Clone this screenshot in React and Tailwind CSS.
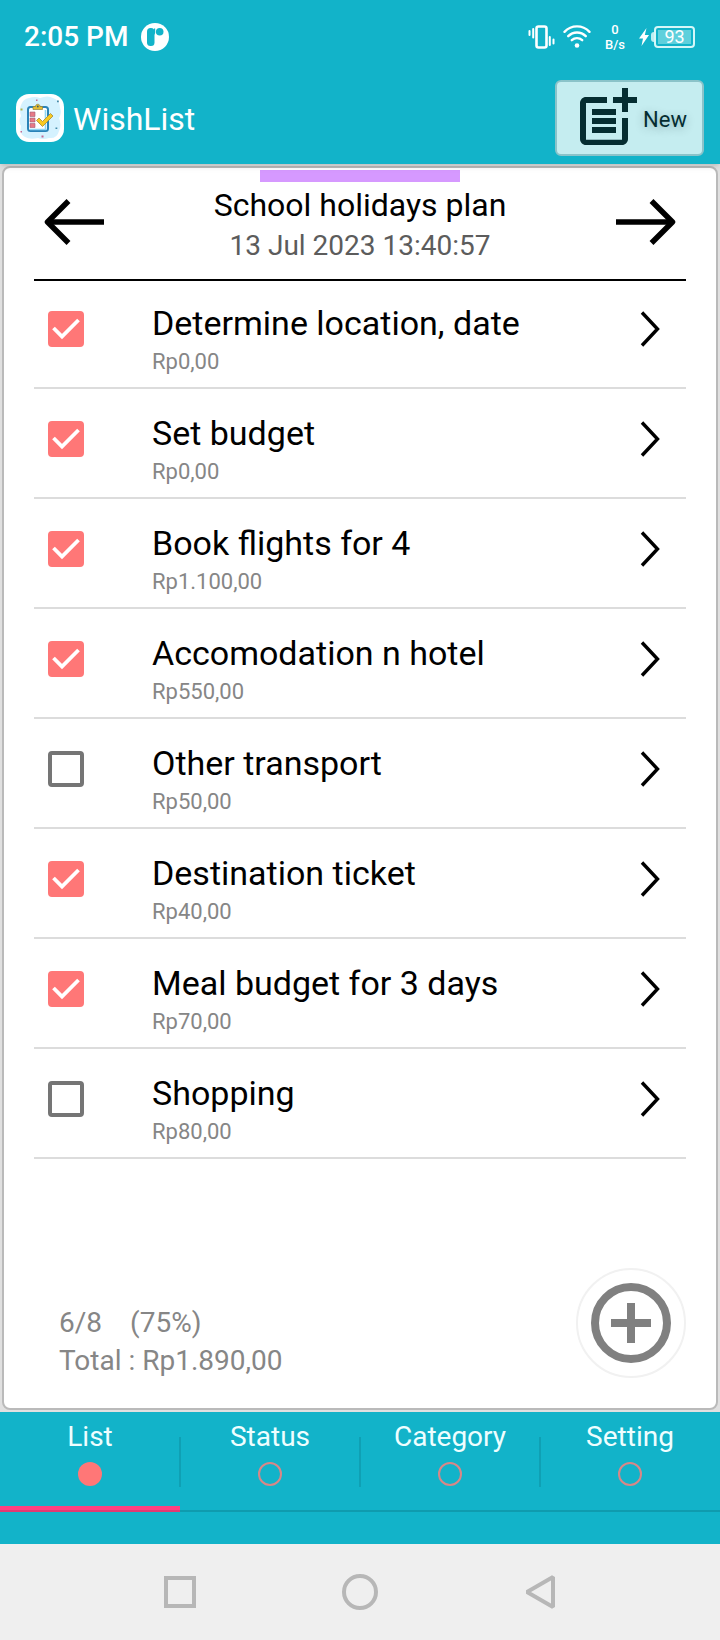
import { useState } from 'react';
import { MdPostAdd } from 'react-icons/md';

const initialItems = [
    { id: 1, name: 'Determine location, date', price: 0, done: true },
    { id: 2, name: 'Set budget', price: 0, done: true },
    { id: 3, name: 'Book flights for 4', price: 1100, done: true },
    { id: 4, name: 'Accomodation n hotel', price: 550, done: true },
    { id: 5, name: 'Other transport', price: 50, done: false },
    { id: 6, name: 'Destination ticket', price: 40, done: true },
    { id: 7, name: 'Meal budget for 3 days', price: 70, done: true },
    { id: 8, name: 'Shopping', price: 80, done: false },
];

const tabs = ['List', 'Status', 'Category', 'Setting'];

const formatPrice = (value) => `Rp${String(value).replace(/\B(?=(\d{3})+$)/g, '.')},00`;

function StatusBar() {
    return (
        <div className="h-[72px] pt-0.5 pl-6 pr-[25px] flex items-center justify-between">
            <div className="flex items-center gap-[13px]">
                <span className="text-[28px] leading-8 font-medium">2:05 PM</span>
                <svg viewBox="0 0 28 28" className="w-7 h-7">
                    <circle cx="14" cy="14" r="14" fill="#fff" />
                    <rect x="6" y="5" width="7.5" height="18" rx="3.5" fill="#12b3c9" />
                    <circle cx="18.7" cy="8.8" r="3.8" fill="#12b3c9" />
                    <path d="M13 5.5 H14.2 V10 L13 12Z" fill="#12b3c9" />
                </svg>
            </div>

            <div className="flex items-center">
                {/* Vibrate */}
                <svg viewBox="0 0 28 24" className="w-7 h-6 mr-[7px]" fill="none" stroke="#fff" strokeLinecap="round">
                    <rect x="8.5" y="1.5" width="10" height="21" rx="2" strokeWidth="2.6" />
                    <path d="M1.5 6 V10 M5.2 4 V12.5 M21.8 12 V20 M25.5 14.5 V18.5" strokeWidth="2" />
                </svg>

                {/* Wifi */}
                <svg viewBox="0 0 28 24" className="w-7 h-6 mr-[14px]" fill="none" stroke="#fff" strokeWidth="2.4" strokeLinecap="round">
                    <path d="M1.5 6.8 C8.5 -0.4 19.5 -0.4 26.5 6.8" />
                    <path d="M5.2 11.2 C10.2 6.2 17.8 6.2 22.8 11.2" />
                    <path d="M8.8 15.2 C11.8 12.4 16.2 12.4 19.2 15.2" />
                    <circle cx="14" cy="20.5" r="2.3" fill="#fff" stroke="none" />
                </svg>

                <div className="w-5 mr-[14px] text-center text-[13px] leading-[15px] font-medium">
                    <div>0</div>
                    <div>B/s</div>
                </div>

                {/* Battery */}
                <svg viewBox="0 0 10 18" className="w-[10px] h-[18px] mr-0.5">
                    <path d="M7.5 0 L0 10.5 H4 L2.5 18 L10 7 H5.8Z" fill="#fff" />
                </svg>
                <span className="w-[3px] h-[10px] rounded-l-sm bg-[#bdeef2]" />
                <div className="w-[41px] h-[22px] p-0.5 border-2 border-[#d5f7f8] rounded-[4px] flex">
                    <div className="w-full bg-[#5fd0dc] flex items-center justify-center text-[18px] leading-4">93</div>
                </div>
            </div>
        </div>
    );
}

function Logo() {
    return (
        <svg viewBox="0 0 48 48" className="w-12 h-12">
            <rect width="48" height="48" rx="13" fill="#fff" />
            <path d="M13 4 Q19 2 24 4 Q32 1 37 4 Q44 6 44 14 Q46 19 43 24 Q46 31 43 37 Q41 45 33 44 Q27 46 22 44 Q14 46 9 43 Q3 40 5 32 Q2 27 5 22 Q3 16 5 11 Q7 5 13 4Z" fill="#d5f2ff" />
            <rect x="12" y="13" width="20" height="24" rx="2.5" fill="#fff" stroke="#2a83b8" strokeWidth="2" />
            <path d="M14 35.5 H29.5 V16" fill="none" stroke="#8fd6f5" strokeWidth="1.6" />
            <path d="M17 15.5 V12.5 H19.5 C19.5 9.5 24 9.5 24 12.5 H26.5 V15.5Z" fill="#e5bd32" stroke="#94833c" strokeWidth="0.7" />
            <circle cx="21.8" cy="12.5" r="0.9" fill="#3d5a64" />
            <path d="M14 18 H19 V22.5 H14Z M14 24 H19 V28 H14Z M14 29.5 H19 V33.5 H14Z" fill="#e77886" stroke="#9d6079" strokeWidth="0.6" />
            <path d="M20.5 26.5 L23 24 L26.5 27.5 L34.5 19.5 L37 22 L26.5 32.5Z" fill="#f8c922" stroke="#a58a35" strokeWidth="0.8" />
            <path d="M20 5.5 H21.5 V7 H20Z M4.5 37 H6 V38.5 H4.5Z M25.5 41.5 H27.5 V43.5 H25.5Z" fill="#c46a93" />
            <path d="M41 6.5 H42.8 V8.3 H41Z M39.5 33.5 H41.3 V35 H39.5Z" fill="#4389a8" />
            <path d="M4.5 14.5 H6.5 V16.5 H4.5Z" fill="#aeb44c" />
        </svg>
    );
}

function Arrow({ label, flip }) {
    return (
        <button type="button" aria-label={label} className="h-20 w-[60px] flex items-center justify-center">
            <svg viewBox="0 0 60 48" className={flip ? 'w-[60px] h-12 rotate-180' : 'w-[60px] h-12'} fill="none" stroke="#000">
                <path d="M3 24 H60" strokeWidth="5.5" />
                <path d="M24.5 3 L3.5 24 L24.5 45" strokeWidth="5.5" strokeLinejoin="round" />
            </svg>
        </button>
    );
}

function Item({ item, onToggle }) {
    return (
        <li className="flex items-start pt-6 first:pt-[22px] pb-1.5 border-b-2 border-[#dcdcdc]">
            <div className="w-[118px] h-[52px] pl-[14px] flex items-center">
                <div className="grid">
                    <input
                        id={`item-${item.id}`}
                        type="checkbox"
                        checked={item.done}
                        onChange={() => onToggle(item.id)}
                        className="col-start-1 row-start-1 appearance-none w-9 h-9 rounded-[4px] border-4 border-[#757575] checked:border-[#ff7777] checked:bg-[#ff7777]"
                    />
                    {item.done && (
                        <svg viewBox="0 0 36 36" className="col-start-1 row-start-1 w-9 h-9 pointer-events-none" fill="none" stroke="#fff" strokeWidth="3.8">
                            <path d="M5.5 17 L14 25.5 L30.5 9" />
                        </svg>
                    )}
                </div>
            </div>
            <div className="flex-1">
                <label htmlFor={`item-${item.id}`} className="block text-[34px] leading-10 text-black">{item.name}</label>
                <p className="text-[22px] leading-[38px] text-[#868686]">{formatPrice(item.price)}</p>
            </div>
            <button type="button" aria-label={`Open ${item.name}`} className="h-[52px] pr-[26px] pl-4 flex items-center">
                <svg viewBox="0 0 20 36" className="w-5 h-9" fill="none" stroke="#000" strokeWidth="3.4">
                    <path d="M2 1.5 L17.5 18 L2 34.5" />
                </svg>
            </button>
        </li>
    );
}

export default function App() {
    const [items, setItems] = useState(initialItems);
    const [activeTab, setActiveTab] = useState('List');

    const toggleItem = (id) => {
        setItems(items.map((item) => (item.id === id ? { ...item, done: !item.done } : item)));
    };

    const doneCount = items.filter((item) => item.done).length;
    const total = items.reduce((sum, item) => sum + item.price, 0);

    return (
        <div className="min-h-screen flex flex-col bg-[#e0e0e0] font-['Roboto',sans-serif]">

            {/* Header */}

            <header className="relative bg-[#12b3c9] text-white shadow-md">
                <StatusBar />
                <div className="pt-2 pb-2 px-4 flex items-center justify-between">
                    <div className="flex items-center gap-[9px]">
                        <Logo />
                        <h1 className="pt-0.5 text-[32px] leading-10">WishList</h1>
                    </div>
                    <button
                        type="button"
                        className="h-[76px] pl-[14px] pr-[15px] flex items-center border-2 border-[#8bc3c9] rounded-md bg-[#c5edf0] text-[#052d31] text-[22px]"
                    >
                        <MdPostAdd className="w-[72px] h-[72px]" />
                        <span className="pt-0.5 text-shadow-[0_2px_10px_rgba(5,45,49,0.3)]">New</span>
                    </button>
                </div>
            </header>

            {/* Plan */}

            <main className="flex-1 flex flex-col p-0.5">
                <section className="flex-1 flex flex-col px-[30px] pt-0.5 pb-7 bg-white border-2 border-[#bababa] rounded-lg">
                    <div className="mx-auto w-[200px] h-3 bg-[#d699ff]" />
                    <div className="px-[10px] pb-[11px] flex items-start justify-between border-b-2 border-black">
                        <Arrow label="Previous plan" />
                        <div className="pt-1 text-center">
                            <h2 className="text-[32px] leading-[38px] text-black">School holidays plan</h2>
                            <p className="text-[28px] leading-[44px] text-[#5c5c5c]">13 Jul 2023 13:40:57</p>
                        </div>
                        <Arrow label="Next plan" flip />
                    </div>

                    <ul>
                        {items.map((item) => (
                            <Item key={item.id} item={item} onToggle={toggleItem} />
                        ))}
                    </ul>

                    <div className="mt-auto pt-4 pl-[25px] flex items-end justify-between">
                        <div className="text-[28px] leading-[38px] text-[#868686]">
                            <p className="flex gap-7">
                                <span>{doneCount}/{items.length}</span>
                                <span>({Math.round((doneCount / items.length) * 100)}%)</span>
                            </p>
                            <p>Total : {formatPrice(total)}</p>
                        </div>
                        <button
                            type="button"
                            aria-label="Add item"
                            className="mb-0.5 w-[110px] h-[110px] flex items-center justify-center rounded-full border-2 border-[#f1f1f1]"
                        >
                            <svg viewBox="0 0 80 80" className="w-20 h-20" fill="none" stroke="#808080" strokeWidth="8">
                                <circle cx="40" cy="40" r="36" />
                                <path d="M40 20 V60 M20 40 H60" />
                            </svg>
                        </button>
                    </div>
                </section>
            </main>

            {/* Tabs */}

            <nav className="grid grid-cols-4 pb-8 bg-[#12b3c9] text-[28px] leading-10 text-[#eefeff]">
                {tabs.map((tab) => (
                    <button
                        key={tab}
                        type="button"
                        onClick={() => setActiveTab(tab)}
                        className="relative h-[100px] pt-[5px] flex flex-col items-center after:absolute after:top-[25px] after:-right-px after:w-0.5 after:h-[50px] after:bg-[#0fa0b4] last:after:hidden"
                    >
                        <span>{tab}</span>
                        <span
                            className={
                                tab === activeTab
                                    ? 'mt-[5px] w-6 h-6 rounded-full bg-[#ff7777]'
                                    : 'mt-[5px] w-6 h-6 rounded-full border-2 border-[#d98787]'
                            }
                        />
                        <span
                            className={
                                tab === activeTab
                                    ? 'mt-auto w-full h-1.5 bg-[#ff4081] border-b-2 border-[#e03973]'
                                    : 'mt-auto w-full h-1.5 border-b-2 border-[#0f9bae]'
                            }
                        />
                    </button>
                ))}
            </nav>

            {/* System navigation */}

            <footer className="h-24 bg-[#efefef]">
                <div className="w-3/4 h-full mx-auto grid grid-cols-3 items-center justify-items-center">
                    <button type="button" aria-label="Recent apps" className="w-8 h-8 border-4 border-[#b7b7b7]" />
                    <button type="button" aria-label="Home" className="w-9 h-9 border-4 border-[#b7b7b7] rounded-full" />
                    <button type="button" aria-label="Back">
                        <svg viewBox="0 0 32 36" className="w-8 h-9" fill="none" stroke="#b7b7b7" strokeWidth="4" strokeLinejoin="bevel">
                            <path d="M29 3 L3 18 L29 33Z" />
                        </svg>
                    </button>
                </div>
            </footer>
        </div>
    );
}
